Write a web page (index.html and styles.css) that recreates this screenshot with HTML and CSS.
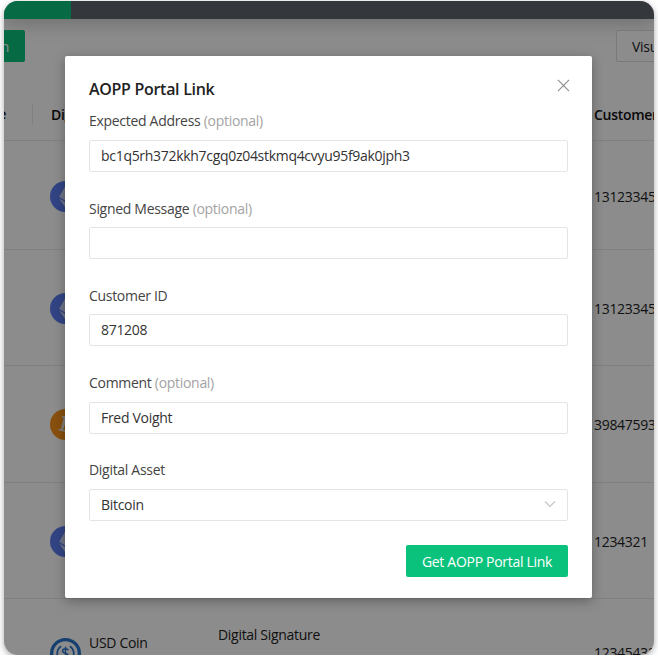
FILE: index.html
```html
<!DOCTYPE html>
<html lang="en">
<head>
  <meta charset="UTF-8">
  <meta name="viewport" content="width=device-width, initial-scale=1.0">
  <title>AOPP Portal Link</title>
  <link rel="stylesheet" href="styles.css">
</head>
<body>
  <div class="frame">
    <div class="topbar"><div class="topbar-brand"></div></div>

    <div class="toolbar">
      <button class="btn-sign">Sign</button>
      <button class="btn-visual">Visualize</button>
    </div>

    <div class="table">
      <div class="row row-head">
        <div class="cell-type"><span>Type</span></div>
        <div>Digital Asset</div>
        <div></div>
        <div>Customer ID</div>
      </div>
      <div class="row row-first">
        <div></div>
        <div class="asset">
          <svg class="coin" viewBox="0 0 32 32"><circle cx="16" cy="16" r="16" fill="#5c7cf0"/><path d="M16 5 9.500 16.300 16 20.500l6.500-4.200zM9.500 18 16 27.500 22.500 18 16 22z" fill="#c9d2f4"/></svg>
        </div>
        <div></div>
        <div>13123345</div>
      </div>
      <div class="row">
        <div></div>
        <div class="asset">
          <svg class="coin" viewBox="0 0 32 32"><circle cx="16" cy="16" r="16" fill="#5c7cf0"/><path d="M16 5 9.500 16.300 16 20.500l6.500-4.200zM9.500 18 16 27.500 22.500 18 16 22z" fill="#c9d2f4"/></svg>
        </div>
        <div></div>
        <div>13123345</div>
      </div>
      <div class="row">
        <div></div>
        <div class="asset">
          <svg class="coin" viewBox="0 0 32 32">
            <circle cx="16" cy="16" r="16" fill="#f7931a"/>
            <path transform="rotate(14 16 16)" fill-rule="evenodd" d="M10.500 8H18c3 0 4.500 1.600 4.500 3.800 0 1.600-.8 2.800-2.200 3.400 1.900.5 3 1.900 3 3.800 0 2.900-2 4.600-5.300 4.600h-7.500v-1.800h2V9.800h-2zM15 10v4.700h2.500c1.500 0 2.400-.9 2.400-2.400S19 10 17.500 10zm0 6.700V22h3c1.600 0 2.500-1 2.500-2.600s-1-2.700-2.700-2.700z" fill="#e8e8e8"/>
          </svg>
        </div>
        <div></div>
        <div>39847593</div>
      </div>
      <div class="row">
        <div></div>
        <div class="asset">
          <svg class="coin" viewBox="0 0 32 32"><circle cx="16" cy="16" r="16" fill="#5c7cf0"/><path d="M16 5 9.500 16.300 16 20.500l6.500-4.200zM9.500 18 16 27.500 22.500 18 16 22z" fill="#c9d2f4"/></svg>
        </div>
        <div></div>
        <div>1234321</div>
      </div>
      <div class="row row-last">
        <div></div>
        <div class="asset">
          <svg class="coin" viewBox="0 0 32 32">
            <circle cx="16" cy="16" r="14.300" fill="#fff" stroke="#2775ca" stroke-width="3.400"/>
            <path d="M11.500 8.500a9 9 0 0 0 0 15M20.500 8.500a9 9 0 0 1 0 15" fill="none" stroke="#2775ca" stroke-width="1.800"/>
            <path d="M19 12.500c-.5-1-1.600-1.500-3-1.500-1.800 0-3 .9-3 2.300 0 3.200 6 1.800 6 5 0 1.400-1.200 2.300-3 2.300-1.400 0-2.500-.5-3-1.500M16 9v14" fill="none" stroke="#2775ca" stroke-width="1.500"/>
          </svg>
          <span class="asset-name">USD Coin<br>USDC</span>
        </div>
        <div class="proof">Digital Signature</div>
        <div>12345432</div>
      </div>
    </div>

    <div class="overlay"></div>

    <div class="modal">
      <svg class="close" viewBox="0 0 14 14"><path d="M1 1l12 12M13 1 1 13" stroke="#8c8c8c" stroke-width="1.200" fill="none"/></svg>
      <h2 class="modal-title">AOPP Portal Link</h2>

      <div class="field">
        <label>Expected Address <span class="optional">(optional)</span></label>
        <div class="input">bc1q5rh372kkh7cgq0z04stkmq4cvyu95f9ak0jph3</div>
      </div>
      <div class="field">
        <label>Signed Message <span class="optional">(optional)</span></label>
        <div class="input"></div>
      </div>
      <div class="field">
        <label>Customer ID</label>
        <div class="input">871208</div>
      </div>
      <div class="field">
        <label>Comment <span class="optional">(optional)</span></label>
        <div class="input">Fred Voight</div>
      </div>
      <div class="field">
        <label>Digital Asset</label>
        <div class="input input-select">
          Bitcoin
          <svg class="chevron" viewBox="0 0 12 8"><path d="M1 1.500 6 6.500l5-5" stroke="#c4c4c4" stroke-width="1.100" fill="none"/></svg>
        </div>
      </div>

      <div class="modal-footer">
        <button class="btn-primary">Get AOPP Portal Link</button>
      </div>
    </div>
  </div>
</body>
</html>
```

FILE: styles.css
```css
* {
  box-sizing: border-box;
}

body {
  margin: 0;
  background: #fff;
  font-family: "Open Sans", "Noto Sans", sans-serif;
  font-size: 14px;
  letter-spacing: -0.3px;
  color: #222;
}

.frame {
  position: relative;
  width: 650px;
  height: 654px;
  margin: 1px 4px 0;
  overflow: hidden;
  background: #fff;
  border-radius: 14px;
  box-shadow: 0 2px 6px rgba(0, 0, 0, 0.35);
}

.topbar {
  height: 18px;
  background: #5f666d;
  box-shadow: 0 3px 20px rgba(0, 0, 0, 0.25);
}

.topbar-brand {
  width: 67px;
  height: 100%;
  background: #0bc27c;
}

.toolbar {
  display: flex;
  justify-content: space-between;
  height: 32px;
  margin-top: 11px;
}

.toolbar button {
  height: 32px;
  font: inherit;
  letter-spacing: inherit;
  border-radius: 2px;
  white-space: nowrap;
}

.btn-sign {
  width: 60px;
  margin-left: -39px;
  padding: 0 16px;
  background: #0bc27c;
  color: #fff;
  border: 0;
  text-align: right;
}

.btn-visual {
  flex: none;
  width: 90px;
  margin-right: -52px;
  padding: 0 0 0 15px;
  background: #fff;
  color: #222;
  border: 1px solid #ddd;
  text-align: left;
}

.table {
  margin-top: 32px;
}

.row {
  display: grid;
  grid-template-columns: 47px 167px 376px 120px;
  align-items: center;
  height: 116.3px;
  padding-top: 2px;
  border-bottom: 1px solid #eaeaea;
}

.row-head {
  height: 47px;
  padding-top: 0;
  padding-bottom: 6px;
  font-weight: 600;
  color: #111;
}

.row-first {
  height: 109px;
}

.row-last {
  height: 110px;
  border-bottom: 0;
  padding-top: 2px;
  padding-bottom: 4px;
}

.cell-type {
  display: flex;
  justify-content: flex-end;
  width: 29px;
  height: 20px;
  padding-right: 26px;
  border-right: 1px solid #eaeaea;
}

.asset {
  display: flex;
  align-items: center;
  gap: 8px;
  margin-left: -1px;
  white-space: nowrap;
}

.asset-name {
  margin-top: 3px;
  line-height: 22px;
}

.row-last .coin {
  margin-top: 2px;
}

.coin {
  flex: none;
  width: 31px;
  height: 31px;
}

.proof {
  align-self: start;
  padding-top: 23px;
  line-height: 22px;
}

.overlay {
  position: absolute;
  inset: 0;
  background: rgba(0, 0, 0, 0.45);
}

.modal {
  position: absolute;
  top: 55px;
  left: 61px;
  width: 527px;
  height: 542px;
  padding: 21px 24px;
  background: #fff;
  border-radius: 2px;
  box-shadow: 0 3px 12px rgba(0, 0, 0, 0.3);
}

.close {
  position: absolute;
  top: 23px;
  right: 22px;
  width: 13px;
  height: 13px;
}

.modal-title {
  margin: 0 0 9px;
  font-size: 16px;
  line-height: 24px;
  font-weight: 600;
  color: #222;
}

.field {
  margin-bottom: 25.2px;
}

.field label {
  display: block;
  height: 22px;
  margin-bottom: 8px;
  padding-top: 0.4px;
  line-height: 22px;
  color: #444;
}

.optional {
  color: #a3a3a3;
}

.input {
  position: relative;
  height: 32px;
  padding: 0 11px;
  line-height: 30px;
  color: #333;
  border: 1px solid #e4e4e4;
  border-radius: 2px;
}

.chevron {
  position: absolute;
  top: 10px;
  right: 11px;
  width: 12px;
  height: 8px;
}

.modal-footer {
  display: flex;
  justify-content: flex-end;
}

.btn-primary {
  width: 162px;
  height: 32px;
  margin-top: -0.5px;
  padding: 0;
  font: inherit;
  letter-spacing: inherit;
  background: #0bc27c;
  color: #fff;
  border: 0;
  border-radius: 2px;
}
```
